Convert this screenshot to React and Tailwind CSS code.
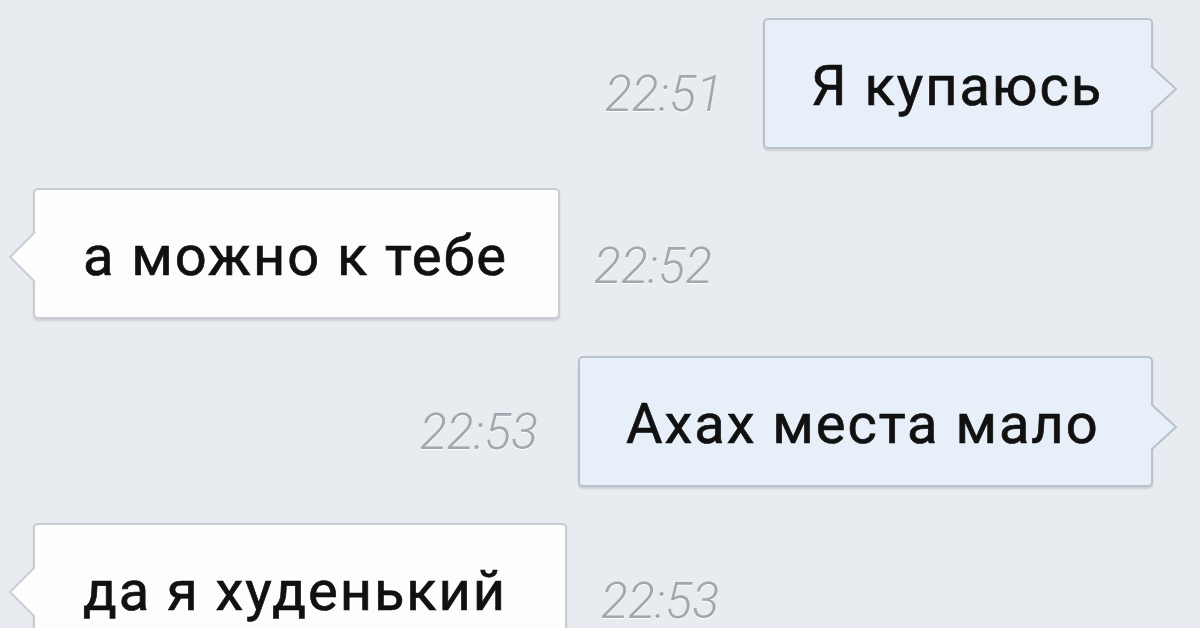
import React from "react";

function Tail({ side, fill, stroke }) {
  if (side === "right") {
    return (
      <svg
        className="absolute top-[45px] right-[-28px]"
        width="30"
        height="48"
        viewBox="0 0 30 48"
      >
        <polygon points="0,0 3,1 27,24 3,47 0,48" fill={fill} />
        <polyline points="2,1 27,24 2,47" fill="none" stroke={stroke} strokeWidth="2" />
      </svg>
    );
  }
  return (
    <svg
      className="absolute top-[41px] left-[-27px]"
      width="29"
      height="52"
      viewBox="0 0 29 52"
    >
      <polygon points="29,0 26,1 2,26 26,51 29,52" fill={fill} />
      <polyline points="27,1 2,26 27,51" fill="none" stroke={stroke} strokeWidth="2" />
    </svg>
  );
}

function Out({ text, time, width, mt }) {
  return (
    <div className={`flex justify-end items-baseline pr-[47px] ${mt}`}>
      <div className="font-light italic text-[50px] leading-none text-[#a2a7ae] mr-[40px] translate-y-[6px] [text-shadow:0_1px_0_#ffffff]">
        {time}
      </div>
      <div
        className={`relative h-[131px] ${width} rounded-[5px] border-2 border-[#b9c2cb] bg-[#e7f0f9] shadow-[0_2px_2px_rgba(0,0,0,0.12)] flex items-center pl-[46px] pt-[4px]`}
      >
        <span className="text-[56px] font-normal leading-none text-[#111111] tracking-[0.035em] whitespace-nowrap [-webkit-text-stroke:0.7px_#111111]">
          {text}
        </span>
        <Tail side="right" fill="#e7f0f9" stroke="#b9c2cb" />
      </div>
    </div>
  );
}

function In({ text, time, width, mt }) {
  return (
    <div className={`flex justify-start items-baseline pl-[33px] ${mt}`}>
      <div
        className={`relative h-[131px] ${width} rounded-[5px] border-2 border-[#c9cdd3] bg-[#fdfdfd] shadow-[0_2px_2px_rgba(0,0,0,0.12)] flex items-center pl-[48px] pt-[4px]`}
      >
        <span className="text-[56px] font-normal leading-none text-[#111111] tracking-[0.035em] whitespace-nowrap [-webkit-text-stroke:0.7px_#111111]">
          {text}
        </span>
        <Tail side="left" fill="#fdfdfd" stroke="#c9cdd3" />
      </div>
      <div className="font-light italic text-[50px] leading-none text-[#a2a7ae] ml-[34px] translate-y-[8px] [text-shadow:0_1px_0_#ffffff]">
        {time}
      </div>
    </div>
  );
}

export default function App() {
  return (
    <div
      className="w-[1200px] h-[628px] overflow-hidden bg-[#e8ebf0] pt-[18px] flex flex-col"
      style={{ fontFamily: "Roboto, 'Liberation Sans', sans-serif" }}
    >
      <Out text="Я купаюсь" time="22:51" width="w-[390px]" mt="" />
      <In text="а можно к тебе" time="22:52" width="w-[527px]" mt="mt-[39px]" />
      <Out text="Ахах места мало" time="22:53" width="w-[575px]" mt="mt-[37px]" />
      <In text="да я худенький" time="22:53" width="w-[534px]" mt="mt-[36px]" />
    </div>
  );
}
